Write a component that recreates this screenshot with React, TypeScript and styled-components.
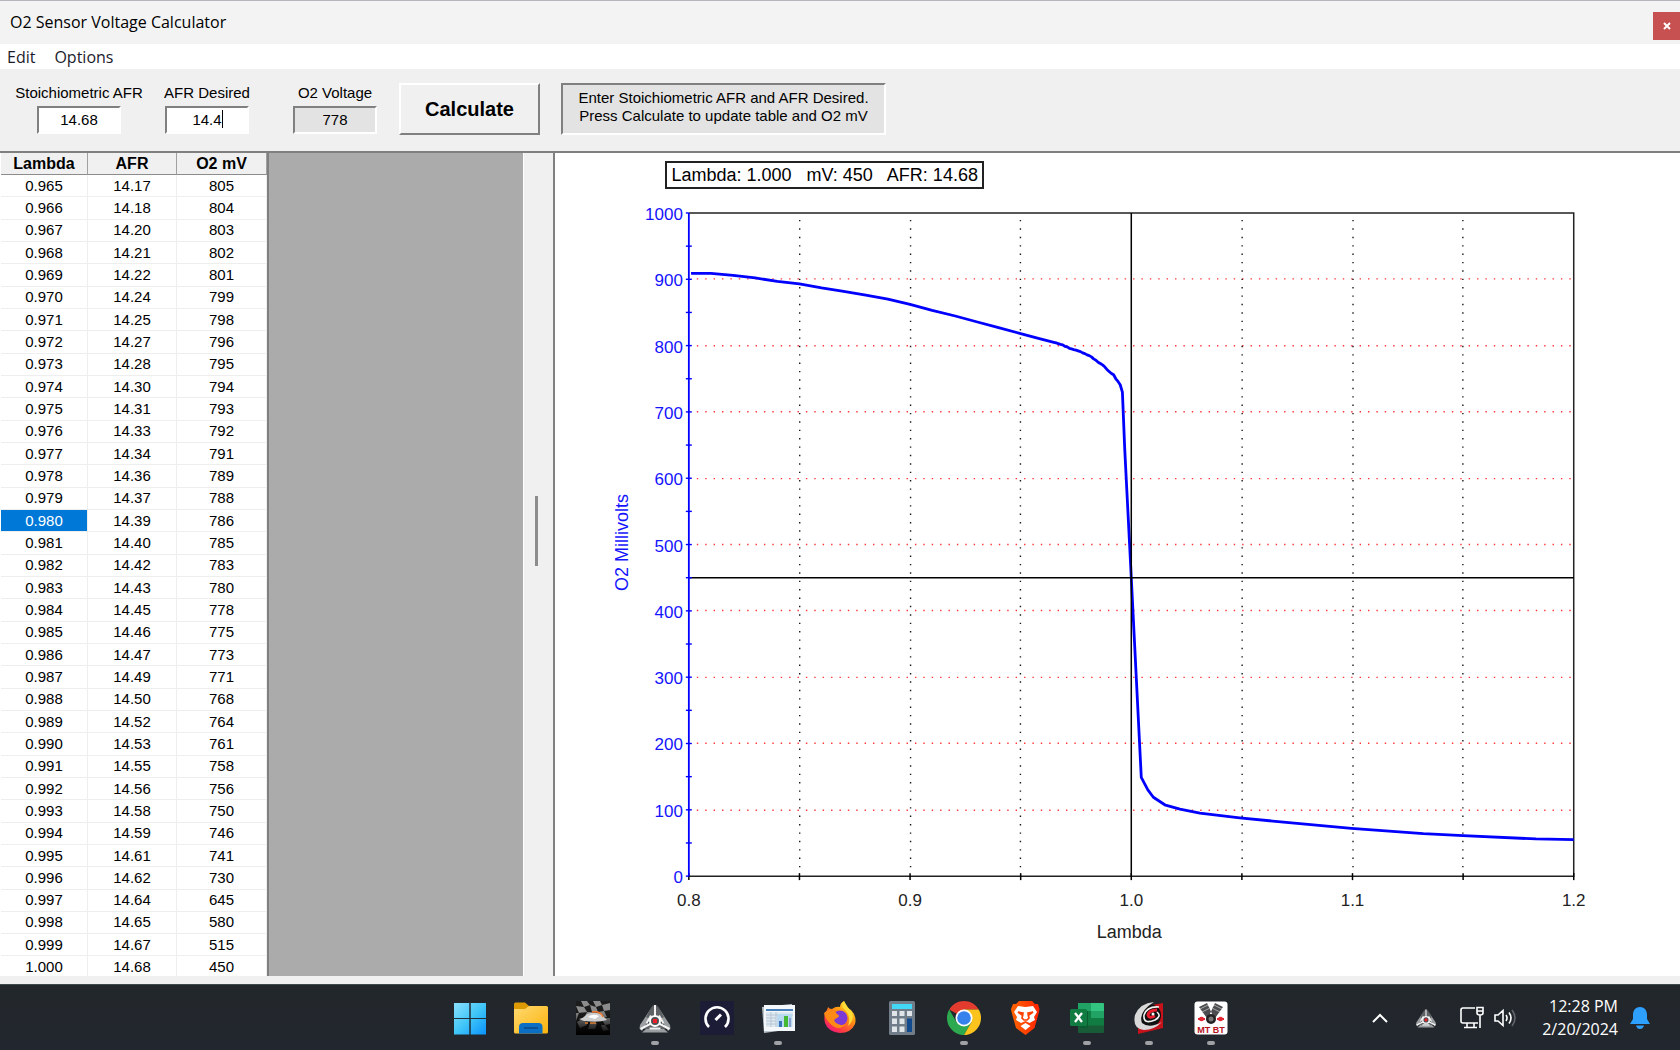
import React, { useState } from "react";
import styled, { createGlobalStyle } from "styled-components";

const GlobalStyle = createGlobalStyle`
  * { box-sizing: border-box; }
  html, body { margin: 0; padding: 0; }
  body { background: #f0f0f0; color: #000; font-family: "Liberation Sans", Arial, sans-serif; }
`;

const UI_FONT = `"Open Sans", "Noto Sans", sans-serif`;
const CLASSIC_FONT = `"Liberation Sans", Arial, sans-serif`;

const rows: [string, string, string][] = (
  "0.965 14.17 805|0.966 14.18 804|0.967 14.20 803|0.968 14.21 802|0.969 14.22 801|0.970 14.24 799|" +
  "0.971 14.25 798|0.972 14.27 796|0.973 14.28 795|0.974 14.30 794|0.975 14.31 793|0.976 14.33 792|" +
  "0.977 14.34 791|0.978 14.36 789|0.979 14.37 788|0.980 14.39 786|0.981 14.40 785|0.982 14.42 783|" +
  "0.983 14.43 780|0.984 14.45 778|0.985 14.46 775|0.986 14.47 773|0.987 14.49 771|0.988 14.50 768|" +
  "0.989 14.52 764|0.990 14.53 761|0.991 14.55 758|0.992 14.56 756|0.993 14.58 750|0.994 14.59 746|" +
  "0.995 14.61 741|0.996 14.62 730|0.997 14.64 645|0.998 14.65 580|0.999 14.67 515|1.000 14.68 450"
)
  .split("|")
  .map((line) => line.split(" ") as [string, string, string]);

/* ---------- window frame ---------- */

const Desktop = styled.div`
  display: flex;
  flex-direction: column;
  height: 100vh;
  overflow: hidden;
`;

const Window = styled.main`
  display: flex;
  flex-direction: column;
  flex: 1;
  min-height: 0;
  background: #f0f0f0;
`;

const TitleBar = styled.header`
  display: flex;
  justify-content: space-between;
  height: 44px;
  padding-left: 10px;
  border-top: 1px solid #b4b5bd;
  background: #f3f3f3;
  font-family: ${UI_FONT};
`;

const Title = styled.h1`
  margin: 0;
  font-size: 16px;
  line-height: 42px;
  font-weight: 400;
`;

const CloseButton = styled.button`
  display: grid;
  place-items: center;
  align-self: flex-end;
  width: 27px;
  height: 28px;
  margin-bottom: 4px;
  padding: 0;
  border: 0;
  background: #c75050;
`;

const MenuBar = styled.nav`
  display: flex;
  align-items: flex-end;
  gap: 19px;
  height: 25px;
  padding-left: 7px;
  background: #fff;
`;

const MenuItem = styled.button`
  padding: 0;
  border: 0;
  background: none;
  color: #1b1b2b;
  font: 16px/24px ${UI_FONT};
`;

/* ---------- toolbar ---------- */

const Toolbar = styled.form`
  display: flex;
  align-items: flex-start;
  height: 84px;
  padding: 14px 15px 0;
  border-bottom: 2px solid #808080;
`;

const Field = styled.div`
  display: flex;
  flex-direction: column;
  align-items: center;
  gap: 4px;
  width: 128px;
  padding-top: 1px;
  font-size: 15px;
  line-height: 18px;
  white-space: nowrap;
`;

const InputWrap = styled.span`
  position: relative;
  display: flex;
`;

const NumberBox = styled.input`
  width: 84px;
  height: 28px;
  padding: 0 0 2px;
  border: 2px solid;
  border-color: #808080 #fff #fff #808080;
  outline: 0;
  background: ${(p) => (p.readOnly ? "#e3e3e3" : "#fff")};
  font: 15px/18px ${CLASSIC_FONT};
  text-align: center;
  caret-color: transparent;
`;

const Caret = styled.span`
  position: absolute;
  top: 4px;
  left: 57px;
  width: 1px;
  height: 18px;
  background: #000;
`;

const CalculateButton = styled.button`
  width: 141px;
  height: 52px;
  margin-right: 21px;
  padding: 0;
  border: 2px solid;
  border-color: #fff #808080 #808080 #fff;
  background: #f0f0f0;
  font: bold 20px/24px ${CLASSIC_FONT};
`;

const Hint = styled.p`
  width: 325px;
  height: 52px;
  margin: 0;
  padding: 4px 0;
  border: 2px solid;
  border-color: #808080 #fff #fff #808080;
  background: #e3e3e3;
  font-size: 15px;
  line-height: 18px;
  text-align: center;
  white-space: nowrap;
`;

/* ---------- table pane ---------- */

const Workspace = styled.div`
  display: flex;
  flex: 1;
  min-height: 0;
  margin-bottom: 8px;
`;

const TablePane = styled.section`
  display: flex;
  flex: 0 0 calc(33% + 1px);
  padding-left: 1px;
  background: #fff;
`;

const TableScroll = styled.div`
  flex: none;
  width: 268px;
  overflow: hidden;
  border-right: 2px solid #808080;
`;

const DataTable = styled.table`
  width: 100%;
  height: calc(100% + 3px);
  border-collapse: separate;
  border-spacing: 0;
  table-layout: fixed;
`;

const HeadCell = styled.th`
  width: ${(p) => p.width}px;
  height: 22px;
  padding: 1px 0 0;
  border-right: 1px solid #a0a0a0;
  border-bottom: 1px solid #8c8c8c;
  background: #f0f0f0;
  font-size: 16px;
  line-height: 20px;
`;

const Cell = styled.td<{ $selected?: boolean }>`
  padding: 0;
  border-right: 1px solid #eee;
  border-bottom: 1px solid #eee;
  background: ${(p) => (p.$selected ? "#0078d7" : "#fff")};
  color: ${(p) => (p.$selected ? "#fff" : "#000")};
  font-size: 15px;
  line-height: 18px;
  text-align: center;
`;

const EmptyArea = styled.div`
  flex: 1;
  background: #ababab;
`;

const Splitter = styled.div`
  display: flex;
  align-items: center;
  justify-content: center;
  width: 32px;
  padding-right: 4px;
  border-left: 1px solid #fff;
  border-right: 2px solid #808080;
  background: #f0f0f0;
`;

const Grip = styled.span`
  width: 3px;
  height: 70px;
  margin-bottom: 68px;
  background: #8c8c8c;
`;

/* ---------- chart pane ---------- */

const ChartPane = styled.section`
  display: flex;
  flex-direction: column;
  flex: 1;
  min-width: 0;
  padding-top: 8px;
  background: #fff;
`;

const Readout = styled.output`
  align-self: flex-start;
  height: 28px;
  margin-left: 110px;
  padding: 0 4px;
  border: 2px solid #222;
  font-size: 18px;
  line-height: 24px;
  white-space: pre;
`;

const ChartSvg = styled.svg`
  flex: 1;
  width: 100%;
  min-height: 0;
  font-family: ${CLASSIC_FONT};
`;

const LEFT = 689;
const RIGHT = 1575;
const TOP = 212;
const BOTTOM = 876;
const xOf = (lambda: number) => LEFT + ((lambda - 0.8) / 0.4) * (RIGHT - LEFT);
const yOf = (mv: number) => BOTTOM - (mv / 1000) * (BOTTOM - TOP);

const richSide: [number, number][] = [
  [0.801, 909], [0.81, 909], [0.82, 906], [0.83, 902], [0.84, 897], [0.85, 893],
  [0.86, 887], [0.87, 882], [0.88, 876], [0.89, 870], [0.9, 862], [0.91, 853],
  [0.92, 845], [0.93, 836], [0.94, 827], [0.95, 818], [0.958, 811],
];
const leanSide: [number, number][] = [
  [1.0045, 149], [1.0075, 130], [1.01, 119], [1.0155, 107], [1.022, 101], [1.031, 95],
  [1.049, 88], [1.07, 81], [1.0995, 72], [1.132, 64], [1.15, 61], [1.183, 56], [1.2, 55],
];
const curve = [
  ...richSide,
  ...rows.map(([l, , mv]) => [Number(l), Number(mv)] as [number, number]),
  ...leanSide,
]
  .map(([l, mv]) => `${xOf(l).toFixed(1)},${yOf(mv).toFixed(1)}`)
  .join(" ");

const hundreds = [0, 100, 200, 300, 400, 500, 600, 700, 800, 900, 1000];
const lambdaTicks = [0.8, 0.85, 0.9, 0.95, 1, 1.05, 1.1, 1.15, 1.2];

function Chart() {
  return (
    <ChartSvg viewBox="556 188 1124 788" role="img" aria-label="O2 millivolts by lambda">
      {hundreds.slice(1, 10).map((v) => (
        <line key={v} x1={LEFT + 8} x2={RIGHT - 3} y1={Math.round(yOf(v))} y2={Math.round(yOf(v))}
          stroke="#ff2020" strokeWidth="1.4" strokeDasharray="1.4 7" opacity="0.9" />
      ))}
      {lambdaTicks.slice(1, 8).filter((v) => v !== 1).map((v) => (
        <line key={v} x1={Math.round(xOf(v))} x2={Math.round(xOf(v))} y1={TOP + 7} y2={BOTTOM - 4}
          stroke="#000" strokeWidth="1.4" strokeDasharray="1.4 7" opacity="0.9" />
      ))}
      <path d={`M${LEFT} ${TOP}H${RIGHT}V${BOTTOM}H${LEFT}`} fill="none" stroke="#222" strokeWidth="1.5" />
      {lambdaTicks.map((v) => (
        <line key={v} x1={xOf(v)} x2={xOf(v)} y1={BOTTOM - 3} y2={BOTTOM + 4} stroke="#000" strokeWidth="1.5" />
      ))}
      <polyline points={curve} fill="none" stroke="#0000ff" strokeWidth="2.8" strokeLinejoin="round" />
      <path d={`M${xOf(1)} ${TOP}V${BOTTOM}M${LEFT} ${yOf(450)}H${RIGHT}`} stroke="#000" strokeWidth="1.5" />
      <g stroke="#0000ff" strokeWidth="1.4">
        <line x1={LEFT} x2={LEFT} y1={TOP} y2={BOTTOM} strokeWidth="1.8" />
        {Array.from({ length: 21 }, (_, i) => (
          <line key={i} x1={LEFT - 3} x2={LEFT + (i === 0 || i === 20 ? 0 : 3)} y1={yOf(i * 50)} y2={yOf(i * 50)} />
        ))}
      </g>
      <g fill="#1414ff" fontSize="17" textAnchor="end">
        {hundreds.map((v) => (
          <text key={v} x={LEFT - 6} y={yOf(v) + 7}>{v}</text>
        ))}
      </g>
      <g fill="#222" fontSize="17" textAnchor="middle">
        {[0.8, 0.9, 1, 1.1, 1.2].map((v) => (
          <text key={v} x={xOf(v)} y={906}>{v.toFixed(1)}</text>
        ))}
      </g>
      <text x={1130} y={938} fill="#222" fontSize="18" textAnchor="middle">Lambda</text>
      <text transform="translate(628 542) rotate(-90)" fill="#1414ff" fontSize="18" textAnchor="middle">
        O2 Millivolts
      </text>
    </ChartSvg>
  );
}

/* ---------- taskbar ---------- */

const Taskbar = styled.footer`
  display: grid;
  grid-template-columns: 1fr 775px 1fr;
  flex: none;
  height: 66px;
  border-top: 1px solid #3d4a4c;
  background: linear-gradient(#22272b, #22262e);
  color: #fff;
  font-family: ${UI_FONT};
`;

const Apps = styled.div`
  display: flex;
  grid-column: 2;
  justify-content: space-between;
  padding-top: 16px;
`;

const AppButton = styled.button`
  display: flex;
  flex-direction: column;
  align-items: center;
  gap: 6px;
  height: 46px;
  padding: 0;
  border: 0;
  background: none;

  svg { display: block; width: 34px; height: 34px; }
`;

const RunningMark = styled.span`
  width: 8px;
  height: 4px;
  border-radius: 2px;
  background: #a0a1a5;
`;

const Tray = styled.div`
  display: flex;
  grid-column: 3;
  justify-content: flex-end;
  align-items: center;
  padding-right: 30px;
`;

const TrayButton = styled.button<{ $gap: number }>`
  display: flex;
  margin: 0 ${(p) => p.$gap}px 0 0;
  padding: 0;
  border: 0;
  background: none;
`;

const Clock = styled.time`
  margin-right: 12px;
  font-size: 16px;
  line-height: 23px;
  text-align: right;
`;

function PrismIcon({ size = 34 }: { size?: number }) {
  return (
    <svg width={size} height={size} viewBox="0 0 34 34" fill="none">
      <path d="M16 2.500 10 13 13 15 4 30 1.500 27.500 2 24 8 15ZM18 2.500 24 13 21 15 30 30 32.500 27.500 32 24 26 15ZM4 31.500 8 28H26L30 31.500Z" fill="#9b9ea1" />
      <path d="M16 4V14L12 18 8 16 14 6ZM18 4V14L22 18 26 16 20 6ZM5 28 13 23 17 25 21 23 29 28Z" fill="#5e6265" />
      <path d="M17 4V15M13 22.500 2.500 28M21 22.500 31.500 28" stroke="#f5f5f5" strokeWidth="2" />
      <path d="M8.500 22.500 13 14.500M25.500 22.500 21 14.500M11.500 27.500H22.500" stroke="#eee" strokeWidth="2" />
      <circle cx="17" cy="20" r="5" fill="#4b4f52" stroke="#fff" strokeWidth="2" />
      <rect x="15" y="18" width="4" height="4" fill="#f0202a" />
    </svg>
  );
}

const apps: { name: string; running?: boolean; icon: React.ReactNode }[] = [
  {
    name: "Start",
    icon: (
      <svg viewBox="0 0 34 34">
        <defs>
          <linearGradient id="win" x1="0" y1="0" x2="1" y2="1">
            <stop stopColor="#8be0fc" /><stop offset=".5" stopColor="#41c6f8" /><stop offset="1" stopColor="#0a93fb" />
          </linearGradient>
        </defs>
        <path d="M1 2H16.500V17H1ZM17.500 2H33V17H17.500ZM1 18H16.500V33.500H1ZM17.500 18H33V33.500H17.500Z" fill="url(#win)" />
        <path d="M17 1V34M0 17.500H34" stroke="#20303a" />
      </svg>
    ),
  },
  {
    name: "File Explorer",
    icon: (
      <svg viewBox="0 0 34 34">
        <defs>
          <linearGradient id="folder" x1="0" y1="0" x2="1" y2="1">
            <stop stopColor="#ffd970" /><stop offset="1" stopColor="#fbb40c" />
          </linearGradient>
        </defs>
        <path d="M0 3Q0 1.500 1.500 1.500H11L15 5V10H0Z" fill="#dd9a03" />
        <path d="M0 8H11L15 5H32.500Q34 5 34 6.500V31Q34 32.500 32.500 32.500H1.500Q0 32.500 0 31Z" fill="url(#folder)" />
        <path d="M5 32.500V26Q5 22 9 22H24.500Q28.500 22 28.500 26V32.500Z" fill="#0b6fc4" />
        <path d="M10 27H24" stroke="#0a4684" strokeWidth="1.500" />
      </svg>
    ),
  },
  {
    name: "Racing",
    icon: (
      <svg viewBox="0 0 34 34">
        <defs>
          <linearGradient id="fade" x1="0" y1="0" x2="0" y2="1">
            <stop offset=".3" stopOpacity="0" /><stop offset="1" />
          </linearGradient>
        </defs>
        <path d="M0 0H34V34H0Z" fill="#1c1c1c" />
        <path d="M5 0H11L14 4 8 6ZM17 0H24L26 4 20 6ZM0 5 8 6 11 11 3 12ZM14 4 20 6 22 11 16 11ZM26 4 34 2V9L28 10ZM3 12 0 20V12ZM11 11 16 11 13 17 8 17ZM22 11 28 10 31 16 25 17ZM1 21 8 17 11 24 4 27ZM25 17 34 17V23L29 24ZM14 22 21 22 19 28 12 28ZM25 24 29 24 33 29 27 30Z" fill="#8c8c8c" />
        <path d="M0 0H34V34H0Z" fill="url(#fade)" />
        <path d="M3 18Q8 17 11 13Q18 10 25 13L31 19Q22 22 8 20Z" fill="#ccc" />
        <path d="M16 11Q25 10 27 16" fill="none" stroke="#f0772a" strokeWidth="1.500" />
        <path d="M12 16Q17 12 23 15L19 18Z" fill="#fff" /><path d="M9 22H12M14 22H20" stroke="#dc8136" strokeWidth="1.500" />
      </svg>
    ),
  },
  { name: "Logger", running: true, icon: <PrismIcon /> },
  {
    name: "Speed Test",
    icon: (
      <svg viewBox="0 0 34 34" fill="none">
        <path d="M0 0H34V34H0Z" fill="#1c1c37" />
        <path d="M9 26A11.500 11.500 0 1 1 25 26" stroke="#fff" strokeWidth="2.600" />
        <path d="M15.500 19 21 13.500" stroke="#fff" strokeWidth="3" />
      </svg>
    ),
  },
  {
    name: "Calculator Table",
    running: true,
    icon: (
      <svg viewBox="0 0 34 34">
        <path d="M1 6 31 3 32 28 3 32Z" fill="#b8c2c9" />
        <path d="M3 4H34V30H3Z" fill="#f5f8fb" />
        <path d="M5 8H32V10H5Z" fill="#4580bb" />
        <path d="M5 11H32V26H5Z" fill="#dfe9f0" />
        <path d="M10 11V26M15 11V26M5 14H32M5 17H15M5 20H15M5 23H15" stroke="#abbccb" strokeWidth=".7" />
        <path d="M16 13H31V26H16Z" fill="#b8d9ef" /><path d="M18 20H21V26H18Z" fill="#3974b7" />
        <path d="M23 15H27V26H23Z" fill="#46b934" /><path d="M28 17H30V26H28Z" fill="#8aa0cf" />
      </svg>
    ),
  },
  {
    name: "Firefox",
    icon: (
      <svg viewBox="0 0 34 34">
        <defs>
          <linearGradient id="fox" x1=".9" y1="0" x2=".2" y2="1">
            <stop stopColor="#fff44f" /><stop offset=".4" stopColor="#ff980e" /><stop offset=".8" stopColor="#ff3647" /><stop offset="1" stopColor="#e31587" />
          </linearGradient>
        </defs>
        <path d="M5 6Q6 8 9 8Q13 5 17 6Q17 2 21 0Q23 7 28 9Q34 15 32 23Q28 32 17 32Q5 31 2 22Q0 13 4 9Z" fill="url(#fox)" />
        <circle cx="17" cy="17" r="7.500" fill="#7d3bd5" />
        <path d="M1 12Q9 5 14 13Q18 15 14 17Q10 18 12 21Q17 26 23 23Q17 30 10 25Q3 20 1 12Z" fill="#ff8a16" />
        <path d="M21 0Q24 6 29 11Q32 19 25 25Q29 14 20 7Q18 4 21 0Z" fill="#ffdb35" />
      </svg>
    ),
  },
  {
    name: "Calculator",
    icon: (
      <svg viewBox="0 0 34 34">
        <rect x="4" width="26" height="34" rx="1.500" fill="#717e89" />
        <path d="M7 3H27V8H7Z" fill="#43d7f6" />
        <path d="M7 10H12V15H7ZM14.500 10H19.500V15H14.500ZM22 10H27V15H22ZM7 17.500H12V23H7ZM14.500 17.500H19.500V23H14.500ZM7 25.500H12V31H7ZM14.500 25.500H19.500V31H14.500Z" fill="#e0e5e9" />
        <path d="M22 17.500H27V31H22Z" fill="#114b8e" />
      </svg>
    ),
  },
  {
    name: "Chrome",
    running: true,
    icon: (
      <svg viewBox="0 0 34 34">
        <path d="M17 17 2.280 8.500A17 17 0 0 1 31.720 8.500L17 8.500Z" fill="#e33b2e" />
        <path d="M2.280 8.500A17 17 0 0 0 17 34L24.400 21.250 9.600 21.250Z" fill="#2da94f" />
        <path d="M31.720 8.500A17 17 0 0 1 17 34L24.400 21.250 17 8.500Z" fill="#fcc31e" />
        <circle cx="17" cy="17" r="8.500" fill="#fff" /><circle cx="17" cy="17" r="6.800" fill="#3582ed" />
      </svg>
    ),
  },
  {
    name: "Brave",
    icon: (
      <svg viewBox="0 0 34 34">
        <defs>
          <linearGradient id="brave"><stop stopColor="#ff6500" /><stop offset="1" stopColor="#ff2200" /></linearGradient>
        </defs>
        <path d="M11 0H24L27 3H30L31.500 8 31 11 26.500 27 17.500 34 8 27 3.500 11 3 8 5 3H8Z" fill="url(#brave)" />
        <path d="M10 5 17.500 6 25 5 29 11 26 16 27 19 21.500 22 17.500 20 13 22 8 19 9 16 6 11Z" fill="#fff" />
        <path d="M12.500 25 17.500 22 22.500 25 17.500 29Z" fill="#fff" />
        <path d="M10 11 15 12 14 14ZM25 11 20 12 21 14ZM15 13 14 17 16 19H19L21 17 20 13" fill="none" stroke="#ff4000" strokeWidth="1.700" />
      </svg>
    ),
  },
  {
    name: "Excel",
    running: true,
    icon: (
      <svg viewBox="0 0 34 34">
        <path d="M8 2H21V10H8Z" fill="#21a366" /><path d="M21 2H33Q34 2 34 3V10H21Z" fill="#33c481" />
        <path d="M8 10H21V17H8Z" fill="#107c41" /><path d="M21 10H34V17H21Z" fill="#21a366" />
        <path d="M8 17H34V25H8Z" fill="#107c41" /><path d="M8 24.500H34V31Q34 32 33 32H9Q8 32 8 31Z" fill="#185c37" />
        <path d="M10 10H18V27H10Z" fill="#0b5b30" />
        <rect y="8" width="17" height="17" rx="1.500" fill="#107c41" />
        <path d="M5 12 12 21M12 12 5 21" stroke="#fff" strokeWidth="2.300" />
      </svg>
    ),
  },
  {
    name: "Tuner",
    running: true,
    icon: (
      <svg viewBox="0 0 34 34">
        <path d="M20 4 31 2V27L6 33 6 27 12 24Z" fill="#c5121b" />
        <ellipse cx="16.500" cy="15.500" rx="13" ry="11.500" fill="#111" transform="rotate(-35 16.500 15.500)" />
        <path d="M22 1Q8 2 3 14Q0 28 12 29Q22 29 30 21Q17 28 10 22Q6 11 22 1Z" fill="#d9d9da" />
        <path d="M27 6Q15 5 12 14Q11 24 23 19Q30 15 25 11" fill="none" stroke="#f2f2f2" strokeWidth="1.600" />
        <path d="M25 9Q17 9 16 14Q17 18 23 15" fill="none" stroke="#e91d2b" strokeWidth="3" />
        <circle cx="21" cy="13" r="1.500" fill="#fff" />
      </svg>
    ),
  },
  {
    name: "MT BT",
    running: true,
    icon: (
      <svg viewBox="0 0 34 34">
        <rect x=".5" y=".5" width="33" height="33" rx="3" fill="#fff" />
        <path d="M5 6 13 2 20 17 15 20ZM29 6 21 2 14 17 19 20Z" fill="#4b4d50" />
        <path d="M6 8 14 4M8 11 16 7M28 8 20 4M26 11 18 7" stroke="#aaa" />
        <circle cx="17" cy="18" r="5" fill="#222" /><circle cx="17" cy="18" r="2.500" fill="#777" />
        <path d="M4 18H11M23 18H30" stroke="#e22632" strokeWidth="2" />
        <ellipse cx="7.500" cy="18" rx="2.500" ry="2.300" fill="#e22632" /><ellipse cx="26.500" cy="18" rx="2.500" ry="2.300" fill="#e22632" />
        <text x="17" y="31.500" fill="#b8121c" fontFamily="Liberation Sans, Arial, sans-serif" fontSize="9" fontWeight="700" textAnchor="middle">MT BT</text>
      </svg>
    ),
  },
];

export default function App() {
  const [stoich, setStoich] = useState("14.68");
  const [desired, setDesired] = useState("14.4");

  return (
    <Desktop>
      <GlobalStyle />
      <Window>
        <TitleBar>
          <Title>O2 Sensor Voltage Calculator</Title>
          <CloseButton type="button" aria-label="Close">
            <svg width="8" height="8" viewBox="0 0 8 8"><path d="M1 1 7 7M7 1 1 7" stroke="#fff" strokeWidth="2" /></svg>
          </CloseButton>
        </TitleBar>
        <MenuBar>
          <MenuItem type="button">Edit</MenuItem>
          <MenuItem type="button">Options</MenuItem>
        </MenuBar>
        <Toolbar onSubmit={(e) => e.preventDefault()}>
          <Field>
            <label htmlFor="stoich">Stoichiometric AFR</label>
            <NumberBox id="stoich" value={stoich} onChange={(e) => setStoich(e.target.value)} />
          </Field>
          <Field>
            <label htmlFor="desired">AFR Desired</label>
            <InputWrap>
              <NumberBox id="desired" value={desired} onChange={(e) => setDesired(e.target.value)} />
              <Caret />
            </InputWrap>
          </Field>
          <Field>
            <label htmlFor="voltage">O2 Voltage</label>
            <NumberBox id="voltage" value="778" readOnly />
          </Field>
          <CalculateButton type="submit">Calculate</CalculateButton>
          <Hint>
            Enter Stoichiometric AFR and AFR Desired.
            <br />
            Press Calculate to update table and O2 mV
          </Hint>
        </Toolbar>
        <Workspace>
          <TablePane>
            <TableScroll>
              <DataTable>
                <thead>
                  <tr>
                    <HeadCell width={87}>Lambda</HeadCell>
                    <HeadCell width={89}>AFR</HeadCell>
                    <HeadCell width={90}>O2 mV</HeadCell>
                  </tr>
                </thead>
                <tbody>
                  {rows.map(([lambda, afr, mv]) => (
                    <tr key={lambda}>
                      <Cell $selected={lambda === "0.980"}>{lambda}</Cell>
                      <Cell>{afr}</Cell>
                      <Cell>{mv}</Cell>
                    </tr>
                  ))}
                </tbody>
              </DataTable>
            </TableScroll>
            <EmptyArea />
            <Splitter><Grip /></Splitter>
          </TablePane>
          <ChartPane>
            <Readout>{"Lambda: 1.000   mV: 450   AFR: 14.68"}</Readout>
            <Chart />
          </ChartPane>
        </Workspace>
      </Window>
      <Taskbar>
        <Apps>
          {apps.map((app) => (
            <AppButton key={app.name} type="button" aria-label={app.name}>
              {app.icon}
              {app.running && <RunningMark />}
            </AppButton>
          ))}
        </Apps>
        <Tray>
          <TrayButton type="button" aria-label="Show hidden icons" $gap={27}>
            <svg width="16" height="10" viewBox="0 0 16 10" fill="none"><path d="M1 9 8 2 15 9" stroke="#fff" strokeWidth="2" /></svg>
          </TrayButton>
          <TrayButton type="button" aria-label="Logger" $gap={23}><PrismIcon size={22} /></TrayButton>
          <TrayButton type="button" aria-label="Network" $gap={10}>
            <svg width="24" height="24" viewBox="0 0 24 24" fill="none" stroke="#fff" strokeWidth="1.600">
              <path d="M15 2H3Q1 2 1 4V15Q1 17 3 17H18M7 17V21M14 17V21M4 21.500H17" />
              <path d="M17 1.500H23V7Q23 9 20 9Q17 9 17 7ZM17 5H23M20 9V22" />
            </svg>
          </TrayButton>
          <TrayButton type="button" aria-label="Volume" $gap={24}>
            <svg width="24" height="20" viewBox="0 0 24 20" fill="none" stroke="#fff" strokeWidth="1.600">
              <path d="M1 7H4L9 2.500V17.500L4 13H1Z" /><path d="M12 7Q14 10 12 13M15 4.500Q19 10 15 15.500" />
              <path d="M18 2Q24 10 18 18" stroke="#62666b" />
            </svg>
          </TrayButton>
          <Clock dateTime="2024-02-20T12:28">12:28 PM<br />2/20/2024</Clock>
          <TrayButton type="button" aria-label="Notifications" $gap={0}>
            <svg width="20" height="22" viewBox="0 0 20 22">
              <path d="M10 0C5 0 3 4 3 8V12L0 17H20L17 12V8C17 4 15 0 10 0ZM6 18.500H14Q13 22 10 22Q7 22 6 18.500Z" fill="#2ea0ff" />
            </svg>
          </TrayButton>
        </Tray>
      </Taskbar>
    </Desktop>
  );
}
